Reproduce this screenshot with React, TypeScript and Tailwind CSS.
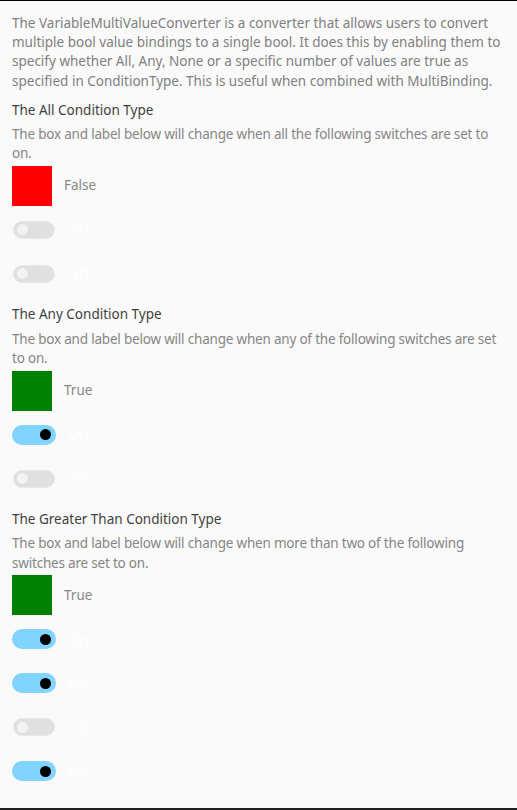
import React from "react"

interface Section {
  title: string
  description: string[]
  result: boolean
  switches: boolean[]
}

const intro = [
  "The VariableMultiValueConverter is a converter that allows users to convert",
  "multiple bool value bindings to a single bool. It does this by enabling them to",
  "specify whether All, Any, None or a specific number of values are true as",
  "specified in ConditionType. This is useful when combined with MultiBinding.",
]

const sections: Section[] = [
  {
    title: "The All Condition Type",
    description: [
      "The box and label below will change when all the following switches are set to",
      "on.",
    ],
    result: false,
    switches: [false, false],
  },
  {
    title: "The Any Condition Type",
    description: [
      "The box and label below will change when any of the following switches are set",
      "to on.",
    ],
    result: true,
    switches: [true, false],
  },
  {
    title: "The Greater Than Condition Type",
    description: [
      "The box and label below will change when more than two of the following",
      "switches are set to on.",
    ],
    result: true,
    switches: [true, true, false, true],
  },
]

function Lines({ lines, className }: { lines: string[]; className: string }) {
  return (
    <p className={className}>
      {lines.map((line) => (
        <span key={line} className="block whitespace-nowrap">
          {line}
        </span>
      ))}
    </p>
  )
}

function Toggle({ on }: { on: boolean }) {
  return (
    <div className="flex h-[44px] items-center">
      {on ? (
        <div className="flex h-[20px] w-[44px] items-center justify-end rounded-full bg-[#80d4ff] pr-[5px]">
          <div className="h-[11px] w-[11px] rounded-full bg-black" />
        </div>
      ) : (
        <div className="ml-px flex h-[18px] w-[42px] items-center rounded-full border border-[#e8e8e8] bg-[#e0e0e0] pl-[3px]">
          <div className="h-[11px] w-[11px] rounded-full bg-[#f2f2f2]" />
        </div>
      )}
      <span className="ml-[12px] text-[15px] text-white">{on ? "On" : "Off"}</span>
    </div>
  )
}

export default function App() {
  return (
    <div
      className="flex h-[810px] flex-col border-t border-b-2 border-t-black border-b-[#1e1e1e] bg-[#fafafa] pl-[12px] pr-[6px] pt-[12.5px] text-[13.5px] leading-[19.4px]"
      style={{ fontFamily: '"Noto Sans", "Open Sans", sans-serif' }}
    >
      <Lines lines={intro} className="text-[#808080]" />

      {sections.map((section) => (
        <div key={section.title} className="mt-[9.5px]">
          <h2 className="text-[#3f3f3f]">{section.title}</h2>
          <Lines
            lines={section.description}
            className="mt-[5px] tracking-[-0.2px] text-[#868686]"
          />
          <div className="mt-[2px] flex items-center">
            <div
              className={
                section.result
                  ? "h-[40px] w-[40px] bg-[#008000]"
                  : "h-[40px] w-[40px] bg-[#ff0000]"
              }
            />
            <span className="ml-[12px] text-[#888888]">
              {section.result ? "True" : "False"}
            </span>
          </div>
          <div className="mt-[2px] flex flex-col">
            {section.switches.map((on, i) => (
              <Toggle key={i} on={on} />
            ))}
          </div>
        </div>
      ))}
    </div>
  )
}
